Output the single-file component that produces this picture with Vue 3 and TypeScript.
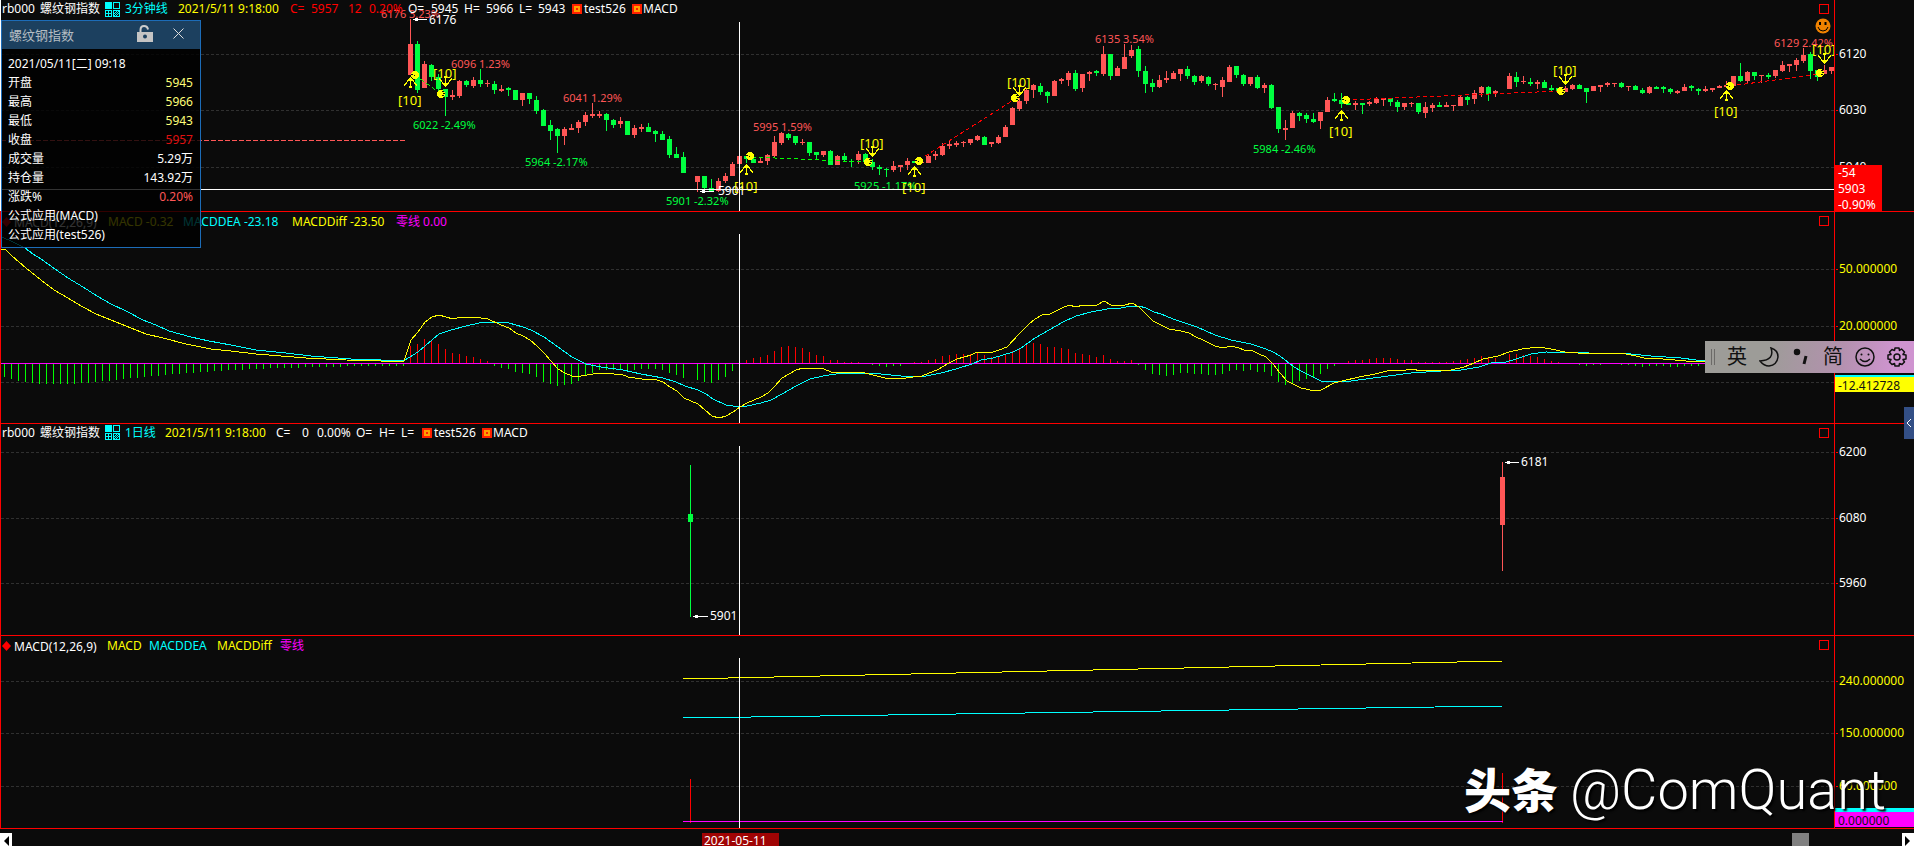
<script setup lang="ts">
interface Candle { x: number; up: boolean; high: number; top: number; bottom: number; low: number }
interface Note { x: number; y: number; text: string; kind: string }

const STEP = 7
const FIRST_CANDLE_X = 410
const FIRST_BAR_X = 4

// One entry per bar: direction, high, body top, body bottom, low. "-" is an empty slot.
const candleSource = `R19,44,75,75 G41,44,90,93 R61,64,88,88 G64,65,77,81 G74,77,89,91 G89,89,97,116 R90,95,97,100 R80,81,96,98
G80,81,85,87 R77,80,86,88 G69,80,84,87 R80,83,84,87 G81,84,90,94 R85,89,91,92 G87,88,90,96 G90,90,100,100
R93,93,100,106 G93,93,99,104 G96,100,111,114 G109,110,126,126 G120,125,131,140 G128,129,136,153 R127,129,136,145 R124,128,130,130
R120,122,128,133 R112,115,122,126 R103,114,116,118 R111,114,116,118 G113,114,120,131 G119,120,125,128 R117,121,124,128 G121,121,135,135
R125,128,135,138 R124,127,129,132 G123,127,132,132 G130,131,134,142 G131,134,140,140 G136,139,155,158 G147,154,158,158 G152,157,173,173
- R176,176,182,192 G176,176,188,191 G179,188,191,191 R178,181,191,192 R173,176,181,183 R162,164,176,176 R155,156,164,164
G155,156,159,163 G156,159,163,163 R158,161,163,163 R154,155,161,165 R136,142,156,158 R132,133,143,145 G133,134,138,140 G136,136,143,145
R139,142,143,145 G142,142,153,156 G152,152,155,159 R151,151,155,157 G150,151,165,165 R155,156,165,165 G153,156,160,162 G159,161,162,167
R151,154,160,164 G153,154,162,165 G159,162,167,170 G165,167,169,175 G168,169,170,177 R161,166,170,172 R165,165,167,172 R158,161,165,170
G161,161,163,163 R160,162,163,163 R155,156,163,163 R151,154,156,160 R143,146,155,156 R141,144,146,149 R141,143,145,147 R141,142,143,147
R139,139,143,145 R135,136,140,141 G136,137,145,145 R142,142,144,147 R135,137,143,144 R125,127,137,137 R107,108,125,125 R98,101,109,111
R88,90,101,104 R84,85,90,98 G83,86,92,95 G91,92,96,103 R80,81,96,96 R78,79,81,84 R71,73,80,86 G70,73,89,91
R74,74,88,92 R71,72,74,81 G70,71,73,76 R46,54,74,76 G54,54,76,80 R66,68,76,76 R44,57,69,69 R45,50,56,58
G46,49,71,77 G66,71,84,93 G79,83,87,92 R75,80,87,88 R71,78,80,83 R71,73,79,79 R69,69,74,81 G66,69,76,79
G75,76,82,85 R75,76,81,83 G76,77,84,86 R83,84,85,90 R77,80,87,97 R65,67,82,82 G66,66,75,78 G74,75,84,86
R77,77,84,86 G75,77,88,89 R83,85,88,93 G84,85,108,109 G107,107,129,133 R120,128,130,140 R111,113,128,128 G112,113,116,121
G113,115,119,123 G113,119,122,123 R112,112,121,129 R97,100,112,112 G93,99,101,102 G93,100,104,108 G97,103,105,105 R101,103,105,110
G103,103,105,114 R101,102,104,106 R97,99,103,104 R98,98,100,106 G98,98,102,106 G100,102,107,112 R103,103,107,110 R102,103,104,107
G103,103,112,114 R102,107,113,118 R103,105,108,112 G102,105,107,107 R102,105,107,107 R105,105,106,111 R95,97,106,106 G96,97,100,105
R90,93,99,104 R86,87,93,97 G86,87,94,101 R90,91,93,97 - R73,76,89,89 G72,77,82,87 R76,81,82,84
G78,82,84,86 R80,82,84,89 G80,82,88,88 G85,88,90,92 G88,88,92,92 R86,88,92,92 R84,85,89,90 G84,85,89,89
G88,88,92,103 R86,86,91,91 R85,85,87,92 R82,83,85,87 R83,83,84,87 G82,83,87,88 R86,86,87,91 G85,86,90,90
G88,90,93,94 R86,87,93,94 G86,87,89,89 G86,87,89,93 G88,89,92,94 R90,91,93,94 R84,87,91,91 G85,86,88,91
G88,89,91,95 R86,89,91,92 R88,88,90,92 R85,86,88,88 R81,85,87,88 R76,76,86,86 G63,76,81,82 R71,72,81,83
G72,72,76,80 R75,75,76,83 G73,75,77,79 R70,70,76,78 R61,65,71,72 R64,64,66,72 R58,60,65,71 R48,55,61,63
G52,54,71,79 G70,70,77,81 R65,70,74,74 R67,67,71,74`

const candles: Candle[] = candleSource.split(/\s+/).flatMap((entry, i) => {
  if (entry === '-') return []
  const [high, top, bottom, low] = entry.slice(1).split(',').map(Number)
  return [{ x: FIRST_CANDLE_X + i * STEP, up: entry[0] === 'R', high, top, bottom, low }]
})

const dayCandles: Candle[] = [
  { x: 690, up: false, high: 41, top: 90, bottom: 98, low: 193 },
  { x: 1502, up: true, high: 38, top: 53, bottom: 101, low: 147 },
]

const notes: Note[] = [
  { x: 381, y: 18, text: '6176 3.23%', kind: 'rise' },
  { x: 451, y: 68, text: '6096 1.23%', kind: 'rise' },
  { x: 563, y: 102, text: '6041 1.29%', kind: 'rise' },
  { x: 413, y: 129, text: '6022 -2.49%', kind: 'fall' },
  { x: 525, y: 166, text: '5964 -2.17%', kind: 'fall' },
  { x: 666, y: 205, text: '5901 -2.32%', kind: 'fall' },
  { x: 753, y: 131, text: '5995 1.59%', kind: 'rise' },
  { x: 854, y: 190, text: '5925 -1.17%', kind: 'fall' },
  { x: 1095, y: 43, text: '6135 3.54%', kind: 'rise' },
  { x: 1253, y: 153, text: '5984 -2.46%', kind: 'fall' },
  { x: 1774, y: 47, text: '6129 2.42%', kind: 'rise' },
]

const orders = [
  { x: 410, y: 78, up: true, tx: 398, ty: 105 },
  { x: 445, y: 86, up: false, tx: 433, ty: 78 },
  { x: 746, y: 165, up: true, tx: 734, ty: 191 },
  { x: 872, y: 156, up: false, tx: 860, ty: 148 },
  { x: 914, y: 167, up: true, tx: 902, ty: 192 },
  { x: 1019, y: 95, up: false, tx: 1007, ty: 87 },
  { x: 1341, y: 111, up: true, tx: 1329, ty: 136 },
  { x: 1565, y: 84, up: false, tx: 1553, ty: 75 },
  { x: 1726, y: 91, up: true, tx: 1714, ty: 116 },
  { x: 1824, y: 63, up: false, tx: 1812, ty: 54 },
]

const fills = [
  { x: 415, y: 75, entry: true }, { x: 441, y: 94, entry: false },
  { x: 750, y: 156, entry: true }, { x: 868, y: 162, entry: false },
  { x: 919, y: 161, entry: true }, { x: 1015, y: 98, entry: false },
  { x: 1346, y: 100, entry: true }, { x: 1561, y: 91, entry: false },
  { x: 1730, y: 86, entry: true }, { x: 1820, y: 73, entry: false },
]

const trades = [
  { x1: 415, y1: 75, x2: 441, y2: 94, kind: 'loss' },
  { x1: 752, y1: 157, x2: 866, y2: 162, kind: 'loss' },
  { x1: 919, y1: 160, x2: 1015, y2: 99, kind: 'gain' },
  { x1: 1346, y1: 100, x2: 1561, y2: 91, kind: 'gain' },
  { x1: 1730, y1: 86, x2: 1820, y2: 74, kind: 'gain' },
]

const histogram = [
  13, 15, 17, 18, 19, 20, 20, 20, 20, 20, 20, 19, 19, 18, 17, 17, 16, 15, 14, 14, 13, 12, 12, 11, 10, 10, 9, 9, 8, 8,
  7, 7, 6, 6, 6, 5, 5, 5, 4, 4, 4, 4, 4, 3, 3, 3, 3, 3, 3, 2, 2, 2, 2, 2, 2, 2, 2, 2,
  -17, -19, -24, -23, -19, -14, -10, -9, -7, -6, -4, -2, 2, 4, 5, 8, 9, 10, 13, 18, 20, 22, 21, 20, 17, 12, 9, 6, 6, 6,
  5, 7, 6, 5, 5, 5, 6, 9, 11, 14, 0, 16, 18, 19, 16, 13, 7, 0, -3, -5, -6, -8, -12, -16, -17, -16, -15, -11, -8, -7,
  -3, -3, -1, -1, -1, 0, 1, 2, 3, 2, 2, 0, -1, -1, -3, -4, -7, -8, -9, -9, -9, -10, -8, -6, -6, -8, -12, -14, -18, -20,
  -19, -16, -16, -15, -14, -10, -9, -8, -6, -8, -4, -2, -2, -3, 1, 6, 10, 11, 12, 11, 9, 9, 10, 10, 11, 11, 10, 7, 6, 7,
  6, 8, 8, 12, 18, 21, 19, 17, 15, 14, 10, 5, 2, 0, -2, -3, -3, -4, -5, -5, -5, -4, -3, -3, -1, -1, -1, -1, -1, -2,
  -3, -4, -5, -7, -6, -5, 0, -9, -9, -8, -7, -6, -4, -2, -1, 0, 0, 1, 2, 1, 1, 0, 0, 1, 1, 2, 3, 2, 2, 2, 3, 3, 2, 2, 2,
].map((v, i) => ({ x: FIRST_BAR_X + i * STEP, y: v < 0 ? 151 + v : 152, h: Math.abs(v), up: v < 0 })).filter((b) => b.h > 0)

const diffLine = `0,37 4,37 11,44 25,56 40,68 53,78 67,86 80,94 95,102 110,108 130,116 145,122 162,126 185,132 210,137 230,139
255,142 280,144 305,146 345,148 380,149 403,149 410,128 417,120 424,110 431,105 438,103 445,105 452,107 460,105 466,106 473,105
487,107 500,113 508,116 515,121 522,124 529,128 536,134 543,141 550,149 557,157 564,161 571,164 580,164 592,162 600,161 613,162
620,162 627,165 634,166 641,167 656,168 662,170 669,175 676,179 683,186 690,189 697,192 704,198 711,204 718,206 725,204 732,200
739,195 746,191 760,185 767,181 774,174 781,166 788,162 795,158 802,156 812,156 823,157 830,160 846,160 852,161 860,160 868,162
876,164 884,166 905,166 912,165 921,164 928,161 936,158 948,151 956,147 970,143 976,140 992,140 998,138 1006,135 1019,121
1027,113 1034,107 1041,103 1049,102 1061,96 1068,93 1075,95 1082,93 1096,93 1103,89 1110,93 1118,94 1124,93 1131,91 1138,95
1145,102 1152,109 1160,113 1168,117 1180,119 1188,121 1195,125 1202,128 1214,134 1222,136 1230,134 1238,136 1243,138 1250,138
1258,142 1265,145 1272,152 1279,161 1286,169 1300,176 1314,179 1320,178 1333,171 1341,169 1358,165 1374,162 1386,159 1405,158
1411,157 1420,159 1450,158 1463,155 1473,151 1482,147 1497,144 1508,140 1521,137 1537,135 1550,137 1564,140 1590,142 1620,141
1635,144 1643,146 1662,147 1685,149 1705,150`

const deaLine = `0,25 8,28 24,36 32,42 40,47 54,57 67,66 82,75 96,84 110,92 125,99 142,108 155,113 168,119 190,125 208,129 230,133
255,138 285,141 310,144 350,147 380,148 404,148 417,140 424,134 431,128 438,122 450,118 465,114 478,111 500,110 508,111 522,115
530,118 543,125 557,135 571,145 585,152 600,155 622,158 640,162 662,166 675,170 684,174 697,178 705,182 712,187 725,193 732,194
746,194 760,191 770,188 781,182 795,174 809,167 822,164 835,162 860,161 880,162 900,164 925,164 940,161 955,157 971,152 980,148
992,146 1012,140 1020,136 1034,126 1048,118 1062,110 1075,104 1090,100 1106,97 1120,96 1130,94 1138,94 1145,96 1153,100
1160,102 1172,107 1181,110 1196,115 1214,123 1230,128 1250,132 1265,137 1272,140 1279,144 1293,155 1300,159 1310,164 1320,169
1328,170 1350,169 1380,165 1410,161 1440,159 1460,158 1478,155 1490,151 1505,150 1515,147 1530,142 1545,140 1588,141 1630,142
1650,144 1680,146 1695,148 1705,148`

const quote = [
  { label: '开盘', value: '5945', tone: 'pale' },
  { label: '最高', value: '5966', tone: 'pale' },
  { label: '最低', value: '5943', tone: 'pale' },
  { label: '收盘', value: '5957', tone: 'hot' },
  { label: '成交量', value: '5.29万', tone: 'plain' },
  { label: '持仓量', value: '143.92万', tone: 'plain' },
  { label: '涨跌%', value: '0.20%', tone: 'warm' },
]
</script>

<template>
  <main class="terminal">
    <section class="panel first">
      <div class="plot">
        <svg class="chart" width="100%" height="211" shape-rendering="crispEdges">
          <line v-for="y in [54, 110, 167]" :key="y" class="grid" x1="1" x2="100%" :y1="y + 0.5" :y2="y + 0.5" />
          <line class="last-close" x1="1" x2="405" y1="140.5" y2="140.5" />
          <g v-for="c in candles" :key="c.x" :class="c.up ? 'up' : 'down'">
            <rect :x="c.x" :y="c.high" width="1" :height="c.low - c.high" />
            <rect :x="c.x - 2" :y="c.top" width="5" :height="c.bottom - c.top" />
          </g>
          <line v-for="t in trades" :key="t.x1" :class="['trade', t.kind]" :x1="t.x1" :y1="t.y1" :x2="t.x2" :y2="t.y2" />
          <text v-for="n in notes" :key="n.x" :x="n.x" :y="n.y" :class="['note', n.kind]">{{ n.text }}</text>
          <path class="pointer" d="M413 19.5H427M415 18.5H418M415 20.5H418" />
          <text class="mark" x="429" y="24">6176</text>
          <path class="pointer" d="M700 191.5H714M702 190.5H705M702 192.5H705" />
          <text class="mark" x="718" y="195">5901</text>
          <g v-for="f in fills" :key="f.x" :transform="`translate(${f.x} ${f.y})`">
            <circle class="fill-dot" r="4" />
            <path v-if="f.entry" class="fill-cut" d="M-4 -0.500H-2M-1 0.500H0" />
            <path v-else class="fill-cut" d="M1 -2.500H3M2 -0.500H4M1 1.500H3" />
          </g>
          <g v-for="o in orders" :key="o.tx" class="order">
            <g :transform="`translate(${o.x} ${o.y}) scale(1 ${o.up ? 1 : -1})`">
              <path class="order-line" d="M0.500 1V9M0.500 0.500L-6 7.500M0.500 0.500L7 7.500" />
              <path class="order-head" d="M0 -1L4 3H-3ZM-1 8H2V10H-1Z" />
            </g>
            <text :x="o.tx" :y="o.ty">[10]</text>
          </g>
          <rect class="cross" x="0" y="189" width="100%" height="1" />
          <rect class="cross" x="739" y="22" width="1" height="189" />
        </svg>
        <header class="legend intraday">
          <span>rb000</span><span>螺纹钢指数</span>
          <svg width="15" height="15" class="period" shape-rendering="crispEdges"><path class="solid" d="M0 0H7V7H0Z" /><path d="M8.500 0.500H14.500V6.500H8.500ZM0.500 8.500H6.500V14.500H0.500ZM3.500 8V15M0 11.500H7M8.500 8.500H14.500V14.500H8.500ZM9 12L12 9M9 14L14 9M11 14L14 11" /></svg>
          <span class="cyan">3分钟线</span><span class="yellow">2021/5/11 9:18:00</span>
          <span class="red">C=</span><span class="red">5957</span><span class="red">12</span><span class="red">0.20%</span>
          <span>O=</span><span>5945</span><span>H=</span><span>5966</span><span>L=</span><span>5943</span>
          <i class="chip"></i><span>test526</span><i class="chip"></i><span>MACD</span>
        </header>
        <button class="max" aria-label="最大化"></button>
        <svg class="smiley" width="16" height="16" viewBox="0 0 16 16"><circle cx="8" cy="8" r="7.500" fill="#f08200" /><path d="M5 4V7M10.500 4V7" stroke="#000" stroke-width="2" /><path d="M3 9Q4 13 8 13T13 9" fill="none" stroke="#000" /></svg>
      </div>
      <svg class="axis" width="80" height="211">
        <path class="tick" d="M1 54.500H3M1 110.500H3M1 167.500H3" />
        <text x="4" y="58">6120</text><text x="4" y="114">6030</text><text x="4" y="171">5940</text>
        <rect class="tag-red" x="0" y="165" width="47" height="46" />
        <text x="3" y="177">-54</text><text x="3" y="193">5903</text><text x="3" y="209">-0.90%</text>
      </svg>
    </section>

    <section class="panel">
      <div class="plot">
        <svg class="chart" width="100%" height="211" shape-rendering="crispEdges">
          <line v-for="y in [57, 114, 170]" :key="y" class="grid" x1="0" x2="100%" :y1="y + 0.5" :y2="y + 0.5" />
          <rect v-for="b in histogram" :key="b.x" :class="b.up ? 'bar-up' : 'bar-down'" :x="b.x - 1" :y="b.y" width="1" :height="b.h" />
          <rect class="zero" x="0" y="151" width="100%" height="1" />
          <polyline class="dea" :points="deaLine" />
          <polyline class="diff" :points="diffLine" />
          <rect class="cross" x="738" y="22" width="1" height="189" />
        </svg>
        <header class="legend macd">
          <svg width="9" height="10" viewBox="0 0 9 10"><path d="M4.500 0L9 5L4.500 10L0 5Z" fill="#f00" /></svg>
          <span class="formula">MACD(12,26,9)</span>
          <span class="yellow">MACD -0.32</span><span class="cyan">MACDDEA -23.18</span>
          <span class="yellow">MACDDiff -23.50</span><span class="magenta">零线 0.00</span>
        </header>
        <button class="max" aria-label="最大化"></button>
      </div>
      <svg class="axis value" width="80" height="211">
        <path class="tick" d="M1 57.500H3M1 114.500H3" />
        <text x="4" y="61">50.000000</text><text x="4" y="118">20.000000</text>
        <rect x="0" y="163" width="80" height="2" fill="#0ff" />
        <rect x="0" y="165" width="80" height="15" fill="#ff0" />
        <text class="dark" x="3" y="178">-12.412728</text>
      </svg>
    </section>

    <section class="panel">
      <div class="plot">
        <svg class="chart" width="100%" height="211" shape-rendering="crispEdges">
          <line v-for="y in [28, 94, 159]" :key="y" class="grid" x1="0" x2="100%" :y1="y + 0.5" :y2="y + 0.5" />
          <g v-for="c in dayCandles" :key="c.x" :class="c.up ? 'up' : 'down'">
            <rect :x="c.x - 1" :y="c.high" width="1" :height="c.low - c.high" />
            <rect :x="c.x - 3" :y="c.top" width="5" :height="c.bottom - c.top" />
          </g>
          <path class="pointer" d="M692 192.500H707M694 191.500H697M694 193.500H697M1504 38.500H1518M1506 37.500H1509M1506 39.500H1509" />
          <text class="mark" x="709" y="196">5901</text>
          <text class="mark" x="1520" y="42">6181</text>
          <rect class="cross" x="738" y="22" width="1" height="189" />
        </svg>
        <header class="legend daily">
          <span>rb000</span><span>螺纹钢指数</span>
          <svg width="15" height="15" class="period" shape-rendering="crispEdges"><path class="solid" d="M0 0H7V7H0Z" /><path d="M8.500 0.500H14.500V6.500H8.500ZM0.500 8.500H6.500V14.500H0.500ZM3.500 8V15M0 11.500H7M8.500 8.500H14.500V14.500H8.500ZM9 12L12 9M9 14L14 9M11 14L14 11" /></svg>
          <span class="cyan">1日线</span><span class="yellow">2021/5/11 9:18:00</span>
          <span>C=</span><span>0</span><span>0.00%</span><span>O=</span><span>H=</span><span>L=</span>
          <i class="chip"></i><span>test526</span><i class="chip"></i><span>MACD</span>
        </header>
        <button class="max" aria-label="最大化"></button>
      </div>
      <svg class="axis" width="80" height="211">
        <path class="tick" d="M1 28.500H3M1 94.500H3M1 159.500H3" />
        <text x="4" y="32">6200</text><text x="4" y="98">6080</text><text x="4" y="163">5960</text>
      </svg>
    </section>

    <section class="panel">
      <div class="plot">
        <svg class="chart" width="100%" height="192" shape-rendering="crispEdges">
          <line v-for="y in [45, 97, 150]" :key="y" class="grid" x1="0" x2="100%" :y1="y + 0.5" :y2="y + 0.5" />
          <rect class="bar-up" x="689" y="143" width="1" height="44" />
          <rect class="bar-up" x="1501" y="137" width="1" height="50" />
          <polyline class="diff" points="682,43 1502,25" />
          <polyline class="dea" points="682,82 1502,70" />
          <rect class="zero" x="682" y="185" width="820" height="1" />
          <rect class="cross" x="738" y="22" width="1" height="170" />
        </svg>
        <header class="legend macd short">
          <svg width="9" height="10" viewBox="0 0 9 10"><path d="M4.500 0L9 5L4.500 10L0 5Z" fill="#f00" /></svg>
          <span class="formula">MACD(12,26,9)</span>
          <span class="yellow">MACD</span><span class="cyan">MACDDEA</span>
          <span class="yellow">MACDDiff</span><span class="magenta">零线</span>
        </header>
        <button class="max" aria-label="最大化"></button>
      </div>
      <svg class="axis value" width="80" height="192">
        <path class="tick" d="M1 45.500H3M1 97.500H3M1 150.500H3" />
        <text x="4" y="49">240.000000</text><text x="4" y="101">150.000000</text><text x="4" y="154">60.000000</text>
        <rect x="0" y="172" width="80" height="4" fill="#0ff" />
        <rect x="0" y="176" width="80" height="15" fill="#f0f" />
        <text class="dark" x="3" y="189">0.000000</text>
      </svg>
    </section>

    <footer class="scroll">
      <button class="scroll-end" aria-label="向左"><svg width="6" height="10"><path d="M6 0V10L1 5Z" /></svg></button>
      <span class="date">2021-05-11</span>
      <span class="thumb"></span>
      <button class="scroll-end" aria-label="向右"><svg width="6" height="10"><path d="M0 0V10L5 5Z" /></svg></button>
    </footer>

    <aside class="quote">
      <header class="quote-head">
        <span class="quote-name">螺纹钢指数</span>
        <button aria-label="锁定"><svg width="16" height="17" viewBox="0 0 16 17"><path d="M3.500 7V5Q3.500 1 7 1T11 4.500" fill="none" stroke="#ccc" stroke-width="2" /><path d="M0 7H16V17H0Z" fill="#c4c4c4" /><circle cx="8" cy="11.500" r="2" fill="#1c405f" /></svg></button>
        <button aria-label="关闭"><svg width="11" height="11"><path d="M0.500 0.500L10.500 10.500M10.500 0.500L0.500 10.500" stroke="#ddd" /></svg></button>
      </header>
      <div class="quote-body">
        <div>2021/05/11[二] 09:18</div>
        <dl v-for="q in quote" :key="q.label"><dt>{{ q.label }}</dt><dd :class="q.tone">{{ q.value }}</dd></dl>
        <div>公式应用(MACD)</div>
        <div>公式应用(test526)</div>
      </div>
    </aside>

    <div class="ime">
      <i class="grip"></i>
      <button>英</button>
      <button aria-label="半角"><svg width="20" height="20" viewBox="0 0 20 20"><path d="M12 1Q16 13 1 14Q5 19 10 19Q18 18 19 10Q19 3 12 1Z" /></svg></button>
      <button aria-label="标点"><svg width="20" height="20" viewBox="0 0 20 20"><circle cx="6" cy="5" r="2.500" fill="#111" /><path d="M15 9L13 17" stroke-width="3" /></svg></button>
      <button>简</button>
      <button aria-label="表情"><svg width="20" height="20" viewBox="0 0 20 20"><circle cx="10" cy="10" r="9" /><path d="M5 12Q10 17 15 12" /><circle cx="6.500" cy="7.500" r="1" fill="#111" stroke="none" /><circle cx="13.500" cy="7.500" r="1" fill="#111" stroke="none" /></svg></button>
      <button aria-label="设置"><svg width="20" height="20" viewBox="0 0 20 20"><path d="M8 1H12L12.500 3.500L14.500 2L17.500 5L16 7.500L19 8V12L16 12.500L17.500 15L15 17.500L12.500 16.500L12 19H8L7.500 16.500L5 17.500L2.500 15L4 12.500L1 12V8L4 7.500L2.500 5L5 2.500L7.500 3.500Z" stroke-linejoin="round" /><circle cx="10" cy="10" r="3" /></svg></button>
    </div>

    <button class="drawer" aria-label="展开"><svg width="6" height="10"><path d="M5 1L1 5L5 9" fill="none" stroke="#fff" /></svg></button>

    <p class="watermark"><b>头条</b><span>@ComQuant</span></p>
  </main>
</template>

<style>
body { background: #0b0b0b; }
</style>

<style scoped>
.terminal {
  position: relative;
  display: flex;
  flex-direction: column;
  min-height: 100vh;
  overflow: hidden;
  background: #0b0b0b;
  color: #fff;
  font: 12px/16px "Noto Sans", "Noto Sans CJK SC", sans-serif;
}
button { padding: 0; border: 0; background: none; color: inherit; font: inherit; cursor: pointer; }
svg { display: block; }
text { fill: #fff; }

.panel { display: flex; border-bottom: 1px solid #f00; }
.plot { display: grid; flex: 1; min-width: 0; border-left: 1px solid #f00; position: relative; }
.first .plot { border-left: 0; box-shadow: inset 1px 0 #fff; }
.chart, .legend { grid-area: 1 / 1; }
.axis { flex: none; width: 79px; border-left: 1px solid #f00; }

.grid { stroke: #303030; stroke-dasharray: 3 2; }
.last-close { stroke: #ff5656; stroke-dasharray: 5 2; }
.up { fill: #ff5656; }
.down { fill: #00ff40; }
.bar-up { fill: #f00; }
.bar-down { fill: #0f0; }
.zero { fill: #f0f; }
.cross { fill: #fff; }
.dea, .diff { fill: none; stroke-width: 1; }
.dea { stroke: #0ff; }
.diff { stroke: #ff0; }
.note { font-size: 11px; }
.note.rise { fill: #ff5656; }
.note.fall { fill: #00ff40; }
.pointer { stroke: #fff; }
.trade { stroke-dasharray: 4 3; }
.trade.gain { stroke: #f00; }
.trade.loss { stroke: #0f0; }
.fill-dot { fill: #ff0; }
.fill-cut { stroke: #0b0b0b; }
.order text { fill: #ff0; font-size: 13px; }
.order-line { stroke: #ff0; fill: none; }
.order-head { fill: #ff0; }

.legend { display: grid; align-self: start; align-items: center; height: 17px; white-space: nowrap; position: relative; margin-left: 1px; }
.first .legend { height: 18px; margin-left: 2px; }
.intraday { grid-template-columns: 38px 65px 20px 53px 112px 21px 37px 21px 39px 23px 33px 22px 33px 19px 34px 12px 48px 11px 1fr; }
.daily { grid-template-columns: 38px 65px 20px 40px 111px 26px 15px 39px 23px 22px 21px 12px 48px 11px 1fr; }
.macd { grid-template-columns: 12px 94px 75px 109px 104px 1fr; }
.short { grid-template-columns: 12px 93px 42px 68px 63px 1fr; }
.formula { padding-top: 3px; }
.period { fill: none; stroke: #0ff; }
.period .solid { fill: #0ff; stroke: none; }
.chip { box-sizing: border-box; width: 10px; height: 10px; border: 2px solid #ff2000; background: #ff2000; box-shadow: inset 0 0 0 2px #ffa000; }
.cyan { color: #0ff; }
.yellow { color: #ff0; }
.red { color: #f00; }
.magenta { color: #f0f; }
.max { position: absolute; top: 4px; right: 5px; width: 10px; height: 10px; border: 1px solid #f00; }
.smiley { position: absolute; top: 18px; right: 3px; }

.tick { stroke: #f00; }
.tag-red { fill: #f00; }
.value text { fill: #ff0; }
.value .dark { fill: #111; }

.scroll { display: flex; position: relative; align-items: flex-start; height: 13px; padding-top: 4px; overflow: hidden; }
.scroll-end { display: grid; place-items: center; width: 12px; height: 16px; background: #fff; }
.date { position: absolute; left: 702px; width: 75px; padding-left: 2px; background: #a00404; }
.thumb { width: 17px; height: 16px; margin-left: auto; margin-right: 93px; background: #808080; }

.quote { position: absolute; left: 1px; top: 20px; width: 198px; border: 1px solid #1c6cb8; }
.quote-head { display: flex; align-items: center; height: 28px; padding: 0 16px 0 7px; background: #1c405f; }
.quote-name { flex: 1; color: #b4bcc2; font-size: 13px; }
.quote-head button { margin-left: 20px; margin-bottom: 4px; }
.quote-body { padding: 5px 7px 3px 6px; background: rgba(0, 0, 0, 0.8); line-height: 19px; }
.quote-body dl { display: flex; justify-content: space-between; margin: 0; }
.quote-body dd { margin: 0; }
.pale { color: #ffff78; }
.hot { color: #e01010; }
.warm { color: #ff5656; }

.ime { position: absolute; top: 341px; right: 0; display: flex; align-items: center; gap: 12px; box-sizing: border-box; width: 209px; height: 32px; padding-left: 6px; background: linear-gradient(100deg, #9d9c98 30%, #b391ae 65%, #cf94d0 90%); }
.ime button { flex: none; width: 20px; height: 24px; color: #111; font-size: 20px; line-height: 24px; }
.ime svg { fill: none; stroke: #111; stroke-width: 1.5; }
.grip { flex: none; width: 2px; height: 16px; border: solid #6c6a68; border-width: 0 1px; }
.drawer { position: absolute; top: 407px; right: 0; display: grid; place-items: center; width: 10px; height: 32px; background: #334f86; }

.watermark { position: absolute; right: 28px; bottom: 24px; display: flex; align-items: center; gap: 12px; margin: 0; color: #fff; line-height: 64px; text-shadow: 2px 2px 2px #000; white-space: nowrap; pointer-events: none; }
.watermark b { font-size: 47px; font-weight: 900; }
.watermark span { font-family: Roboto, sans-serif; font-size: 56px; font-weight: 300; }
</style>
